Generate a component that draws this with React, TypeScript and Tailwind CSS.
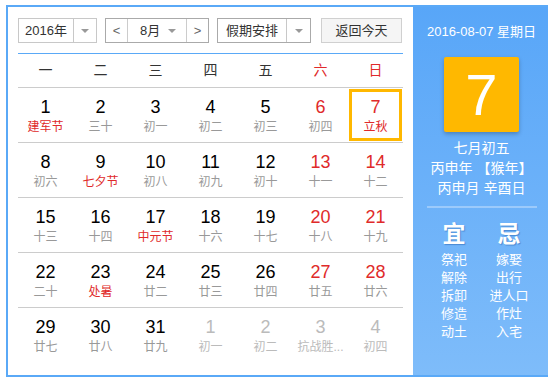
import React from 'react';

type Day = { n: number; lunar: string; red?: boolean; festival?: boolean; other?: boolean; today?: boolean };

const weeks: Day[][] = [
  [
    { n: 1, lunar: '建军节', festival: true },
    { n: 2, lunar: '三十' },
    { n: 3, lunar: '初一' },
    { n: 4, lunar: '初二' },
    { n: 5, lunar: '初三' },
    { n: 6, lunar: '初四', red: true },
    { n: 7, lunar: '立秋', red: true, festival: true, today: true },
  ],
  [
    { n: 8, lunar: '初六' },
    { n: 9, lunar: '七夕节', festival: true },
    { n: 10, lunar: '初八' },
    { n: 11, lunar: '初九' },
    { n: 12, lunar: '初十' },
    { n: 13, lunar: '十一', red: true },
    { n: 14, lunar: '十二', red: true },
  ],
  [
    { n: 15, lunar: '十三' },
    { n: 16, lunar: '十四' },
    { n: 17, lunar: '中元节', festival: true },
    { n: 18, lunar: '十六' },
    { n: 19, lunar: '十七' },
    { n: 20, lunar: '十八', red: true },
    { n: 21, lunar: '十九', red: true },
  ],
  [
    { n: 22, lunar: '二十' },
    { n: 23, lunar: '处暑', festival: true },
    { n: 24, lunar: '廿二' },
    { n: 25, lunar: '廿三' },
    { n: 26, lunar: '廿四' },
    { n: 27, lunar: '廿五', red: true },
    { n: 28, lunar: '廿六', red: true },
  ],
  [
    { n: 29, lunar: '廿七' },
    { n: 30, lunar: '廿八' },
    { n: 31, lunar: '廿九' },
    { n: 1, lunar: '初一', other: true },
    { n: 2, lunar: '初二', other: true },
    { n: 3, lunar: '抗战胜...', other: true },
    { n: 4, lunar: '初四', other: true },
  ],
];

const weekdays = ['一', '二', '三', '四', '五', '六', '日'];
const yi = ['祭祀', '解除', '拆卸', '修造', '动土'];
const ji = ['嫁娶', '出行', '进人口', '作灶', '入宅'];

const Caret = () => (
  <span className="w-0 h-0 border-l-[4px] border-r-[4px] border-t-[4px] border-l-transparent border-r-transparent border-t-[#999]" />
);

export default function App() {
  return (
    <div
      className="w-[548px] h-[379px] overflow-hidden bg-white pl-[6px] pt-[5px]"
      style={{ fontFamily: '"Liberation Sans", "Noto Sans CJK SC", sans-serif' }}
    >
      <div className="w-[546px] h-[372px] border-2 border-[#5aa9f7] flex">
        {/* Left calendar */}
        <div className="w-[405px] px-[10px] pt-[11px]">
          <div className="flex items-center h-[25px] text-[13px] text-[#333]">
            <div className="flex h-[25px] w-[79px] border border-[#c8c8c8]">
              <div className="flex-1 flex items-center justify-center">2016年</div>
              <div className="w-[23px] border-l border-[#c8c8c8] flex items-center justify-center"><Caret /></div>
            </div>
            <div className="flex h-[25px] w-[104px] ml-[8px] border border-[#aaa]">
              <div className="w-[22px] flex items-center justify-center text-[#666] border-r border-[#ccc]">&lt;</div>
              <div className="flex-1 flex items-center justify-between pl-[12px] pr-[10px]">
                <span>8月</span>
                <Caret />
              </div>
              <div className="w-[22px] flex items-center justify-center text-[#666] border-l border-[#ccc]">&gt;</div>
            </div>
            <div className="flex h-[25px] w-[94px] ml-[8px] border border-[#aaa]">
              <div className="flex-1 flex items-center justify-center">假期安排</div>
              <div className="w-[24px] border-l border-[#c8c8c8] flex items-center justify-center"><Caret /></div>
            </div>
            <div className="h-[25px] w-[81px] ml-[10px] border border-[#d0d0d0] bg-[#f5f5f5] flex items-center justify-center">
              返回今天
            </div>
          </div>
          <div className="mt-[10px] border-t border-[#5aa9f7]">
            <div className="grid grid-cols-7 h-[34px] border-b border-[#ccc] text-[14px]">
              {weekdays.map((w, i) => (
                <div key={w} className={`flex items-center justify-center ${i >= 5 ? 'text-[#e02a2a]' : 'text-[#333]'}`}>
                  {w}
                </div>
              ))}
            </div>
            {weeks.map((week, wi) => (
              <div key={wi} className={`grid grid-cols-7 h-[55px] ${wi < 4 ? 'border-b border-[#ccc]' : ''}`}>
                {week.map((d, di) => (
                  <div
                    key={di}
                    className={`flex flex-col items-center ${
                      d.today ? 'border-[3px] border-[#ffb800] pt-[4px] m-[1px]' : 'pt-[8px]'
                    }`}
                  >
                    <span
                      className={`text-[18px] leading-[22px] ${
                        d.other ? 'text-[#bbb]' : d.red ? 'text-[#e02a2a]' : 'text-black'
                      }`}
                    >
                      {d.n}
                    </span>
                    <span
                      className={`text-[12px] leading-[18px] ${
                        d.other ? 'text-[#bbb]' : d.festival ? 'text-[#e02a2a]' : 'text-[#999]'
                      }`}
                    >
                      {d.lunar}
                    </span>
                  </div>
                ))}
              </div>
            ))}
          </div>
        </div>

        {/* Right info panel */}
        <div className="flex-1 bg-gradient-to-b from-[#58a6f8] to-[#7ebcfa] flex flex-col items-center text-white pt-[15px]">
          <div className="text-[13px] leading-[20px]">2016-08-07 星期日</div>
          <div className="mt-[15px] w-[75px] h-[75px] bg-[#ffb800] rounded-[2px] shadow-[0_2px_4px_rgba(0,0,0,0.25)] flex items-center justify-center text-[58px] leading-none">
            7
          </div>
          <div className="mt-[6px] text-[14px] leading-[20px]">七月初五</div>
          <div className="text-[14px] leading-[20px]">丙申年 【猴年】</div>
          <div className="text-[14px] leading-[20px]">丙申月 辛酉日</div>
          <div className="mt-[8px] w-[110px] h-[2px] bg-[#9ccafb]" />
          <div className="mt-[12px] flex w-full justify-center gap-[15px]">
            <div className="flex flex-col items-center w-[40px]">
              <div className="text-[23px] leading-[28px] font-bold [text-shadow:1px_1px_1px_rgba(0,60,140,0.35)]">宜</div>
              <div className="mt-[3px] flex flex-col items-center text-[13px] leading-[18px]">
                {yi.map((t) => <span key={t}>{t}</span>)}
              </div>
            </div>
            <div className="flex flex-col items-center w-[40px]">
              <div className="text-[23px] leading-[28px] font-bold [text-shadow:1px_1px_1px_rgba(0,60,140,0.35)]">忌</div>
              <div className="mt-[3px] flex flex-col items-center text-[13px] leading-[18px] whitespace-nowrap">
                {ji.map((t) => <span key={t}>{t}</span>)}
              </div>
            </div>
          </div>
        </div>
      </div>
    </div>
  );
}
